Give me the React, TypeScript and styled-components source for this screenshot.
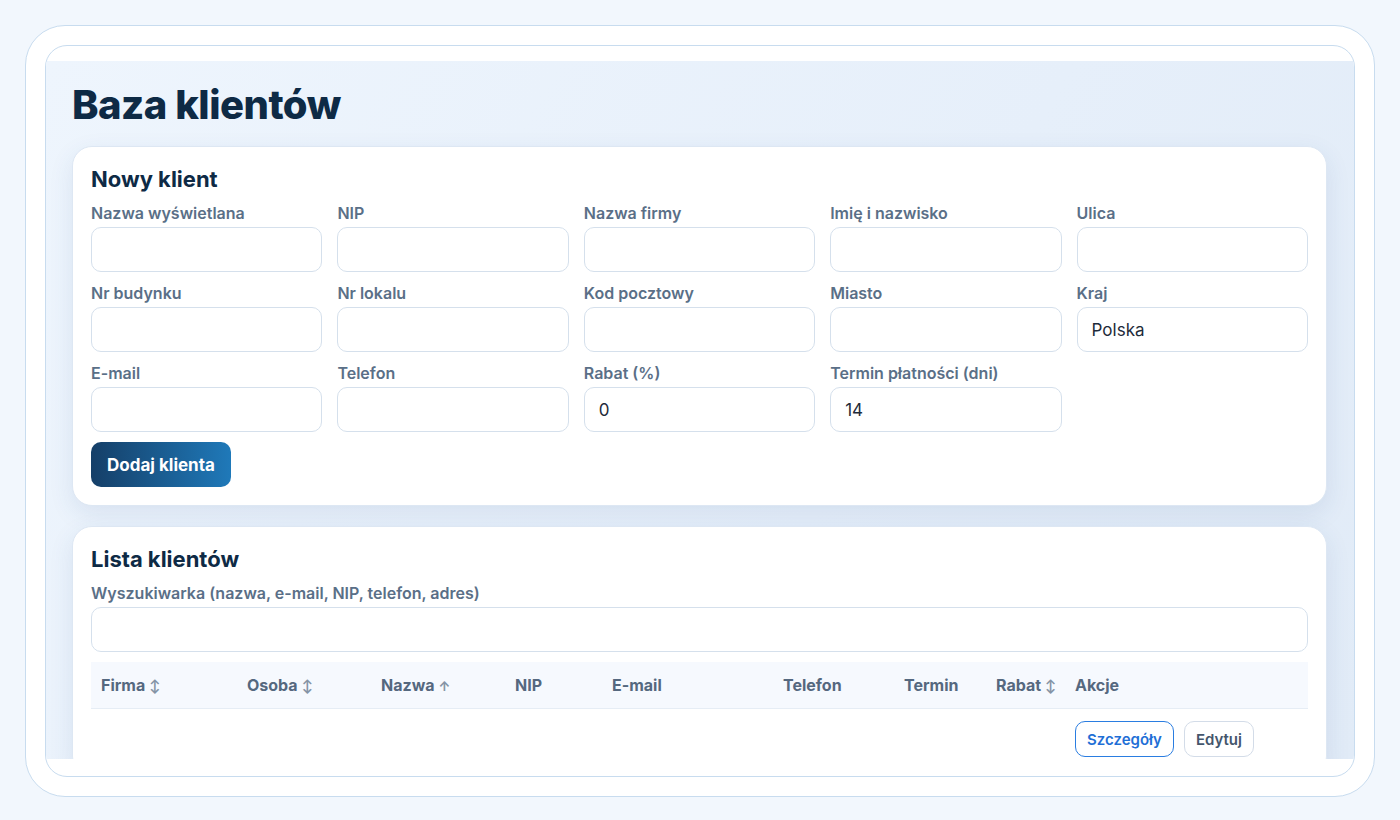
import React from "react";
import styled, { createGlobalStyle } from "styled-components";

const Global = createGlobalStyle`
  html, body { margin: 0; background: #f2f7fd; font-family: "Inter", "Noto Sans", sans-serif; }
  * { box-sizing: border-box; }
`;

const Outer = styled.div`
  margin: 25px;
  height: 772px;
  border: 1px solid #c8dcef;
  border-radius: 40px;
  background: #fff;
  padding: 19px;
`;

const Inner = styled.div`
  height: 732px;
  border: 1px solid #c8dcef;
  border-radius: 22px;
  background: #fff;
  padding: 15px 0 17px;
  overflow: hidden;
`;

const Scroll = styled.div`
  height: 698px;
  overflow: hidden;
  background: linear-gradient(120deg, #eef5fd 0%, #e6effa 60%, #e1ebf7 100%);
  padding: 20px 27px 0 26px;
`;

const Title = styled.h1`
  margin: 0 0 17px;
  font-size: 40px;
  line-height: 48px;
  font-weight: 800;
  color: #0e2a45;
  letter-spacing: -0.5px;
`;

const Card = styled.section`
  background: #fff;
  border: 1px solid #dde7f3;
  border-radius: 20px;
  box-shadow: 0 8px 24px rgba(40, 80, 140, 0.1);
  padding: 16px 18px 18px;
  margin-bottom: 20px;
`;

const CardTitle = styled.h2`
  margin: 0 0 8px;
  font-size: 22px;
  line-height: 32px;
  font-weight: 700;
  color: #0e2a45;
`;

const Grid = styled.div`
  display: grid;
  grid-template-columns: repeat(5, minmax(0, 1fr));
  column-gap: 15px;
  row-gap: 11px;
`;

const Field = styled.label`
  display: flex;
  flex-direction: column;
  gap: 4px;
  min-width: 0;
`;

const Label = styled.span`
  font-size: 16px;
  line-height: 20px;
  font-weight: 600;
  color: #5a6f87;
`;

const Input = styled.input`
  width: 100%;
  min-width: 0;
  height: 45px;
  border: 1px solid #d5e0ec;
  border-radius: 10px;
  padding: 0 14px;
  font-size: 17px;
  font-family: inherit;
  color: #1e2b3a;
  background: #fff;
  outline: none;
`;

const Primary = styled.button`
  margin-top: 10px;
  height: 45px;
  padding: 0 16px;
  border: none;
  border-radius: 10px;
  background: linear-gradient(90deg, #153f68 0%, #1f79b9 100%);
  color: #fff;
  font-family: inherit;
  font-size: 17px;
  font-weight: 700;
`;

const Table = styled.div`
  margin-top: 10px;
`;

const Row = styled.div<{ $head?: boolean }>`
  display: grid;
  grid-template-columns: 146px 134px 134px 97px 171px 121px 92px 79px 1fr;
  align-items: center;
  height: ${p => (p.$head ? "47px" : "48px")};
  padding-left: 10px;
  background: ${p => (p.$head ? "#f6f9fe" : "#fff")};
  border-bottom: ${p => (p.$head ? "1px solid #e6edf5" : "none")};
`;

const Th = styled.span`
  font-size: 16px;
  font-weight: 700;
  color: #55687f;
`;

const Sort = styled.span`
  font-size: 13px;
  color: #8493a5;
  margin-left: 4px;
`;

const Actions = styled.div`
  display: flex;
  gap: 10px;
  align-self: end;
`;

const SmallBtn = styled.button<{ $blue?: boolean }>`
  height: 36px;
  padding: 0 11px;
  border-radius: 10px;
  background: #fff;
  border: 1px solid ${p => (p.$blue ? "#2a7de1" : "#d3dce8")};
  color: ${p => (p.$blue ? "#1f6fd6" : "#44566c")};
  font-family: inherit;
  font-size: 15px;
  font-weight: 600;
`;

const fields: [string, string][] = [
  ["Nazwa wyświetlana", ""], ["NIP", ""], ["Nazwa firmy", ""], ["Imię i nazwisko", ""], ["Ulica", ""],
  ["Nr budynku", ""], ["Nr lokalu", ""], ["Kod pocztowy", ""], ["Miasto", ""], ["Kraj", "Polska"],
  ["E-mail", ""], ["Telefon", ""], ["Rabat (%)", "0"], ["Termin płatności (dni)", "14"],
];

const cols: [string, string][] = [
  ["Firma", "↕"], ["Osoba", "↕"], ["Nazwa", "↑"], ["NIP", ""], ["E-mail", ""],
  ["Telefon", ""], ["Termin", ""], ["Rabat", "↕"], ["Akcje", ""],
];

export default function App() {
  return (
    <>
      <Global />
      <Outer>
        <Inner>
          <Scroll>
            <Title>Baza klientów</Title>
            <Card>
              <CardTitle>Nowy klient</CardTitle>
              <Grid>
                {fields.map(([l, v]) => (
                  <Field key={l}>
                    <Label>{l}</Label>
                    <Input defaultValue={v} />
                  </Field>
                ))}
              </Grid>
              <Primary>Dodaj klienta</Primary>
            </Card>
            <Card>
              <CardTitle>Lista klientów</CardTitle>
              <Field>
                <Label>Wyszukiwarka (nazwa, e-mail, NIP, telefon, adres)</Label>
                <Input />
              </Field>
              <Table>
                <Row $head>
                  {cols.map(([c, s]) => (
                    <Th key={c}>
                      {c}
                      {s && <Sort>{s}</Sort>}
                    </Th>
                  ))}
                </Row>
                <Row>
                  <span /><span /><span /><span /><span /><span /><span /><span />
                  <Actions>
                    <SmallBtn $blue>Szczegóły</SmallBtn>
                    <SmallBtn>Edytuj</SmallBtn>
                  </Actions>
                </Row>
              </Table>
            </Card>
          </Scroll>
        </Inner>
      </Outer>
    </>
  );
}
